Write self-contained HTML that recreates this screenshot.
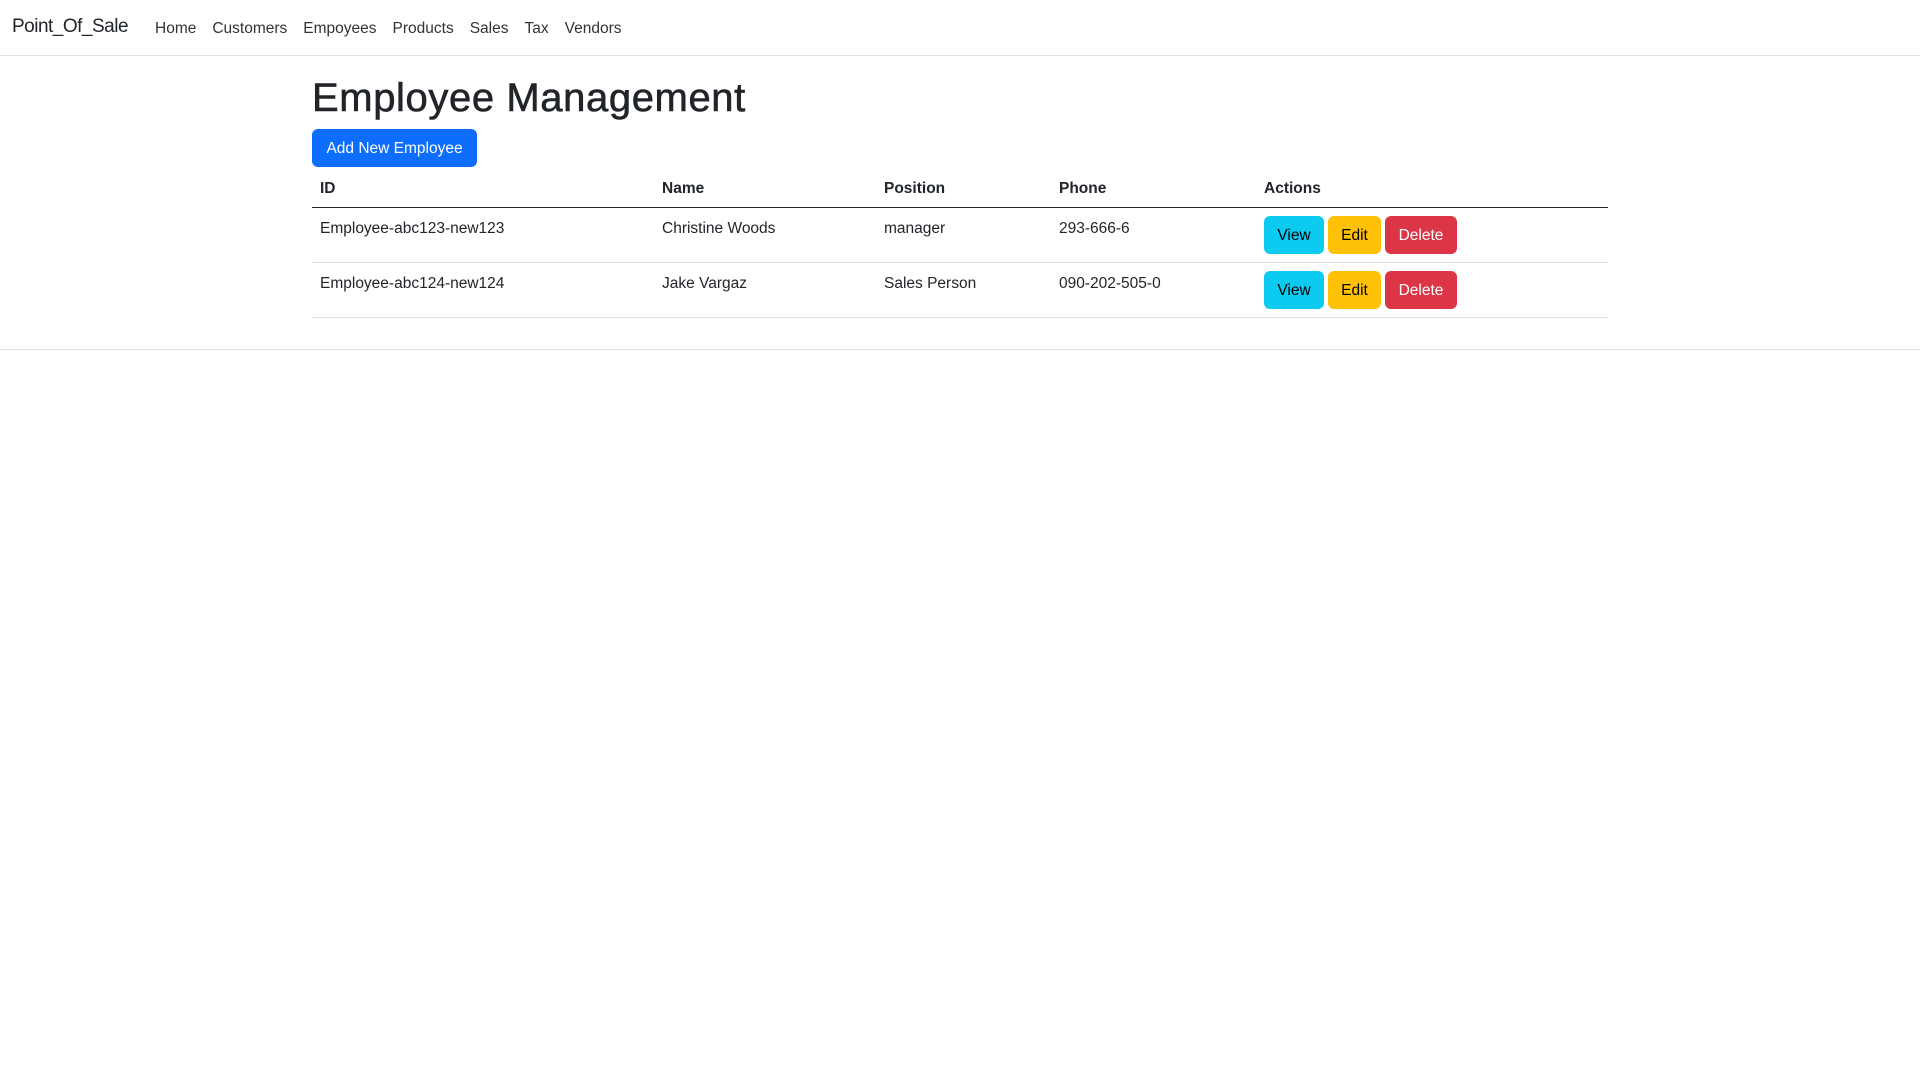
<!DOCTYPE html>
<html><head><style>
*{box-sizing:border-box;margin:0;padding:0}
body{font-family:"Liberation Sans",sans-serif;font-size:16px;color:#212529;background:#fff;width:1920px;height:1080px;position:relative;overflow:hidden}
.nav{height:56px;border-bottom:1px solid #dee2e6;position:relative}
.brand{position:absolute;left:12px;top:16px;font-size:19px;letter-spacing:-0.5px}
.links{position:absolute;left:155px;top:20px;font-size:15.5px;color:#333}
.links span{margin-right:16px}
h1{position:absolute;left:312px;top:76px;font-size:40px;font-weight:500;letter-spacing:0.6px;-webkit-text-stroke:0.6px #212529}
.add{position:absolute;left:312px;top:129px;width:165px;height:38px;background:#0d6efd;color:#fff;border-radius:6px;font-size:15.5px;text-align:center;line-height:40px}
.t{position:absolute;left:312px;width:1296px;font-size:15.5px}
.th{top:170px;height:38px;border-bottom:1.5px solid #212529;font-weight:bold}
.row{height:55px;border-bottom:1px solid #dee2e6}
.c{position:absolute;top:10px}
.b{position:absolute;top:8px;height:38px;border-radius:6px;line-height:40px;text-align:center;font-size:15.5px}
.v{left:952px;width:60px;background:#0dcaf0;color:#000}
.e{left:1016px;width:53px;background:#ffc107;color:#000}
.d{left:1073px;width:72px;background:#dc3545;color:#fff}
.hr{position:absolute;top:349px;left:0;width:1920px;border-top:1px solid #dee2e6}
</style></head><body>
<div class="nav"><div class="brand">Point_Of_Sale</div>
<div class="links"><span>Home</span><span>Customers</span><span>Empoyees</span><span>Products</span><span>Sales</span><span>Tax</span><span>Vendors</span></div></div>
<h1>Employee Management</h1>
<div class="add">Add New Employee</div>
<div class="t th"><div class="c" style="left:8px">ID</div><div class="c" style="left:350px">Name</div><div class="c" style="left:572px">Position</div><div class="c" style="left:747px">Phone</div><div class="c" style="left:952px">Actions</div></div>
<div class="t row" style="top:208px"><div class="c" style="left:8px;top:12px">Employee-abc123-new123</div><div class="c" style="left:350px;top:12px">Christine Woods</div><div class="c" style="left:572px;top:12px">manager</div><div class="c" style="left:747px;top:12px">293-666-6</div><div class="b v">View</div><div class="b e">Edit</div><div class="b d">Delete</div></div>
<div class="t row" style="top:263px"><div class="c" style="left:8px;top:12px">Employee-abc124-new124</div><div class="c" style="left:350px;top:12px">Jake Vargaz</div><div class="c" style="left:572px;top:12px">Sales Person</div><div class="c" style="left:747px;top:12px">090-202-505-0</div><div class="b v">View</div><div class="b e">Edit</div><div class="b d">Delete</div></div>
<div class="hr"></div>
</body></html>
